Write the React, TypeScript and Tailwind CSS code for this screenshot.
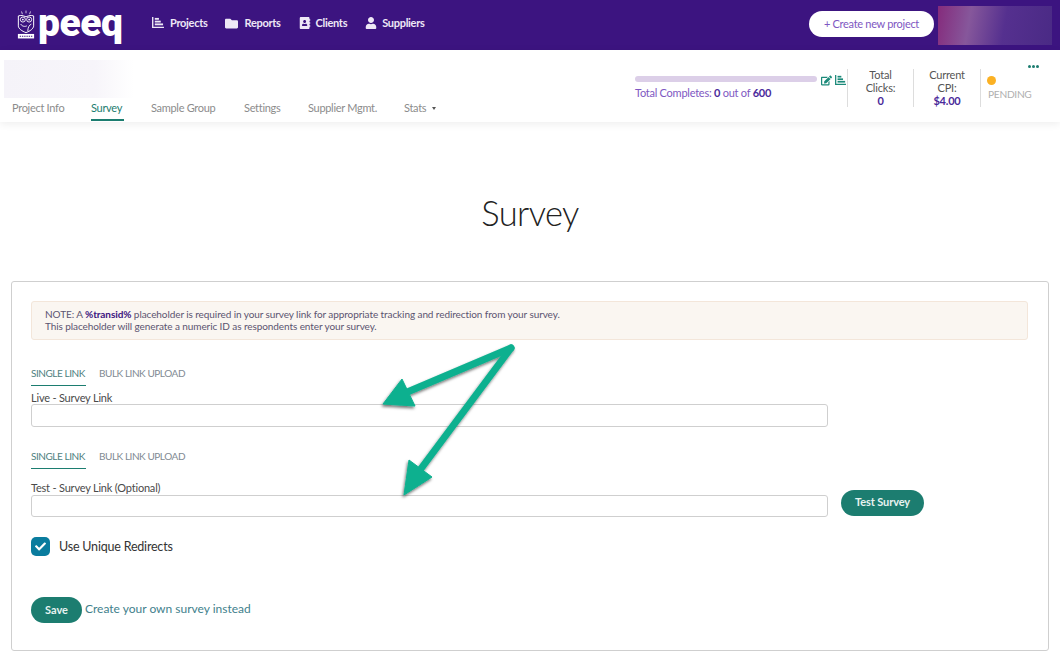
import React from "react";
import { FaFolder, FaAddressBook, FaUser, FaEdit, FaCheck } from "react-icons/fa";

function BarsIcon({ size, className }: { size: number; className?: string }) {
  return (
    <svg width={size} height={size * 0.92} viewBox="0 0 13 12" className={className} fill="currentColor">
      <path d="M0 0h1.500v10.500H13V12H0z" />
      <rect x="3" y="1" width="4.500" height="2" />
      <rect x="3" y="4" width="6.500" height="2" />
      <rect x="3" y="7" width="9" height="2" />
    </svg>
  );
}

function NavItem({ icon, label, gap }: { icon: React.ReactNode; label: string; gap: string }) {
  return (
    <div className={`flex items-center ${gap} text-[11px] font-bold tracking-[-0.3px] text-[#eee8f6]`}>
      {icon}
      <span>{label}</span>
    </div>
  );
}

function Owl() {
  return (
    <svg width="18" height="31" viewBox="0 0 20 31" className="-mt-[2px] shrink-0" fill="none" stroke="#fff">
      <path d="M5 1l1 3M10 0v3M15 1l-1 3" strokeWidth="0.8" />
      <path d="M1.500 6c3-1 5-.5 8.500 1 3.500-1.500 5.500-2 8.500-1v11c0 3-4 6-8.500 7.500C5.500 23 1.500 20 1.500 17z" strokeWidth="1.100" />
      <circle cx="6.500" cy="10" r="2.800" strokeWidth="1" />
      <circle cx="13.500" cy="10" r="2.800" strokeWidth="1" />
      <circle cx="6.500" cy="10" r="1" fill="#fff" stroke="none" />
      <circle cx="13.500" cy="10" r="1" fill="#fff" stroke="none" />
      <path d="M12 23c0-4 1.500-7 4-8M4 15c2 3 5 3 7 2" strokeWidth="1" />
      <rect x="1" y="26" width="18" height="5" fill="#fff" stroke="none" />
      <path d="M3 28.500h14" stroke="#3c1480" strokeWidth="1.200" strokeDasharray="1.500 1" />
    </svg>
  );
}

function LinkTabs({ mb }: { mb: string }) {
  return (
    <div className={`flex items-start gap-[13px] text-[10px] tracking-[-0.45px] ${mb}`}>
      <div className="h-[24px] w-[55px] whitespace-nowrap border-b border-[#1c7d70] pt-[4px] text-[#4f7f80]">SINGLE LINK</div>
      <div className="whitespace-nowrap pt-[4px] text-[#7f8a92]">BULK LINK UPLOAD</div>
    </div>
  );
}

export default function App() {
  return (
    <div className="relative h-[657px] w-[1060px] overflow-hidden bg-white font-['Lato','Noto_Sans',sans-serif] text-[#333]">
      <header className="flex h-[50px] items-center bg-[#3c1480] pl-[17px] pr-[8px]">
        <div className="flex h-[50px] w-[135px] shrink-0 items-center gap-[3px]">
          <Owl />
          <span className="-mt-[5px] font-['Roboto',sans-serif] text-[39px] font-black leading-[46px] tracking-[-0.5px] text-white">peeq</span>
        </div>
        <nav className="-mt-[4px] flex items-center gap-[18px]">
          <NavItem gap="gap-[6px]" icon={<BarsIcon size={12} />} label="Projects" />
          <NavItem gap="gap-[6px]" icon={<FaFolder className="text-[13px]" />} label="Reports" />
          <NavItem gap="gap-[5px]" icon={<FaAddressBook className="text-[12px]" />} label="Clients" />
          <NavItem gap="gap-[5px]" icon={<FaUser className="text-[12px]" />} label="Suppliers" />
        </nav>
        <div className="ml-auto flex items-center gap-[4px]">
          <button className="mb-[2px] flex h-[26px] w-[125px] items-center justify-center rounded-full bg-white text-[11px] tracking-[-0.3px] text-[#7e57c2]">+ Create new project</button>
          <div className="mt-[1px] h-[39px] w-[114px] bg-[linear-gradient(100deg,#852b7c_0%,#86579b_28%,#55308f_58%,#4a2a85_100%)]" />
        </div>
      </header>

      <section className="flex h-[72px] justify-between bg-white pl-[4px] shadow-[0_2px_8px_rgba(0,0,0,0.07)]">
        <div className="flex flex-col pt-[10px]">
          <div className="h-[38px] w-[130px] bg-[linear-gradient(90deg,#f5f3f9_0%,#f7f5fa_70%,#ffffff_100%)]" />
          <div className="mt-[2px] flex pl-[8px] text-[11px] tracking-[-0.3px] text-[#8c8c8c]">
            <div className="w-[52px] whitespace-nowrap">Project Info</div>
            <div className="ml-[27px] h-[21px] w-[33px] whitespace-nowrap border-b-2 border-[#1c7d70] text-[#1c7d70]">Survey</div>
            <div className="ml-[27px] w-[65px] whitespace-nowrap">Sample Group</div>
            <div className="ml-[28px] w-[37px] whitespace-nowrap">Settings</div>
            <div className="ml-[27px] w-[69px] whitespace-nowrap">Supplier Mgmt.</div>
            <div className="ml-[27px] flex h-[16px] items-center whitespace-nowrap">Stats<span className="ml-[6px] border-x-[2px] border-t-[3px] border-x-transparent border-t-[#555]" /></div>
          </div>
        </div>

        <div className="flex pr-[20px] pt-[19px]">
          <div className="flex w-[212px] items-start pt-[7px]">
            <div className="w-[182px]">
              <div className="h-[6px] rounded-full bg-[#dccfe8]" />
              <div className="mt-[3px] whitespace-nowrap text-[11px] tracking-[-0.25px] text-[#7e57c2]">
                Total Completes: <b className="text-[#4a2a9a]">0</b> out of <b className="text-[#4a2a9a]">600</b>
              </div>
            </div>
            <div className="-mt-[1px] ml-[4px] flex items-center gap-[3px] text-[#1c8a7a]">
              <FaEdit className="text-[11px]" />
              <BarsIcon size={11} />
            </div>
          </div>
          <div className="flex h-[38px] w-[66px] flex-col items-center border-l border-[#ddd] text-center text-[11px] leading-[13px] tracking-[-0.2px] text-[#555]">
            <div className="-mt-[1px]">Total<br />Clicks:</div>
            <b className="text-[#4a2a9a]">0</b>
          </div>
          <div className="flex h-[38px] w-[67px] flex-col items-center border-l border-[#ddd] text-center text-[11px] leading-[13px] tracking-[-0.2px] text-[#555]">
            <div className="-mt-[1px]">Current<br />CPI:</div>
            <b className="text-[#4a2a9a]">$4.00</b>
          </div>
          <div className="relative h-[38px] w-[60px] border-l border-[#ddd] pl-[6px] pt-[7px]">
            <div className="h-[9px] w-[9px] rounded-full bg-[#fbb124]" />
            <div className="ml-[1px] mt-[3px] text-[10.200px] leading-[13px] tracking-[-0.3px] text-[#b0b0b0]">PENDING</div>
            <div className="absolute -top-[4px] right-[1px] flex gap-[1px]">
              <span className="h-[3px] w-[3px] rounded-full bg-[#1c7d70]" />
              <span className="h-[3px] w-[3px] rounded-full bg-[#1c7d70]" />
              <span className="h-[3px] w-[3px] rounded-full bg-[#1c7d70]" />
            </div>
          </div>
        </div>
      </section>

      <h1 className="mt-[70px] text-center text-[34.500px] font-light leading-[42px] tracking-[-0.6px] text-[#222]">Survey</h1>

      <main className="mx-[11px] mt-[47px] h-[370px] rounded-[3px] border border-[#cfcfcf] pl-[19px] pr-[20px] pt-[19px]">
        <div className="h-[39px] rounded-[3px] border border-[#f3e6da] bg-[#faf6f1] px-[13px] pt-[6px] text-[10px] leading-[12px] tracking-[-0.085px] text-[#5a5470]">
          NOTE: A <b className="text-[#3c1480]">%transid%</b> placeholder is required in your survey link for appropriate tracking and redirection from your survey.<br />
          This placeholder will generate a numeric ID as respondents enter your survey.
        </div>

        <div className="mt-[22px]">
          <LinkTabs mb="mb-[5px]" />
          <label className="block text-[11px] leading-[13px] tracking-[-0.2px] text-[#4a4a4a]">Live - Survey Link</label>
          <div className="h-[23px] w-[797px] rounded-[3px] border border-[#cfcfcf]" />
        </div>

        <div className="mt-[18px]">
          <LinkTabs mb="mb-[12px]" />
          <label className="mb-[1px] block text-[11px] leading-[13px] tracking-[-0.2px] text-[#4a4a4a]">Test - Survey Link (Optional)</label>
          <div className="flex items-center gap-[13px]">
            <div className="h-[22px] w-[797px] rounded-[3px] border border-[#cfcfcf]" />
            <button className="-mt-[7px] h-[26px] w-[83px] rounded-full bg-[#1c7d70] text-[11px] font-bold tracking-[-0.1px] text-[#e8f3f1]">Test Survey</button>
          </div>
        </div>

        <div className="mt-[20px] flex items-center gap-[9px]">
          <div className="flex h-[19px] w-[19px] items-center justify-center rounded-[5px] bg-[#0a7c9e] text-white">
            <FaCheck className="text-[11px]" />
          </div>
          <span className="mt-[1px] text-[12.500px] tracking-[-0.2px] text-[#333]">Use Unique Redirects</span>
        </div>

        <div className="mt-[40px] flex items-center gap-[3px]">
          <button className="h-[26px] w-[51px] rounded-full bg-[#1c7d70] text-[11px] font-bold text-[#e8f3f1]">Save</button>
          <a className="-mt-[2px] text-[12px] text-[#3f7f8c]">Create your own survey instead</a>
        </div>
      </main>

      <svg className="pointer-events-none absolute left-0 top-0" width="1060" height="657" viewBox="0 0 1060 657">
        <defs>
          <filter id="s" x="-20%" y="-20%" width="140%" height="140%">
            <feDropShadow dx="-1" dy="2" stdDeviation="1.500" floodColor="#000" floodOpacity="0.55" />
          </filter>
        </defs>
        <g filter="url(#s)" fill="#0bb08f" stroke="#0bb08f" strokeLinejoin="round">
          <path d="M511 348L405 393" strokeWidth="7" strokeLinecap="round" />
          <path d="M383 404L402 379L415 406Z" strokeWidth="1" />
          <path d="M511 348L420 470" strokeWidth="7" strokeLinecap="round" />
          <path d="M404 495L409 460L432 477Z" strokeWidth="1" />
        </g>
      </svg>
    </div>
  );
}
